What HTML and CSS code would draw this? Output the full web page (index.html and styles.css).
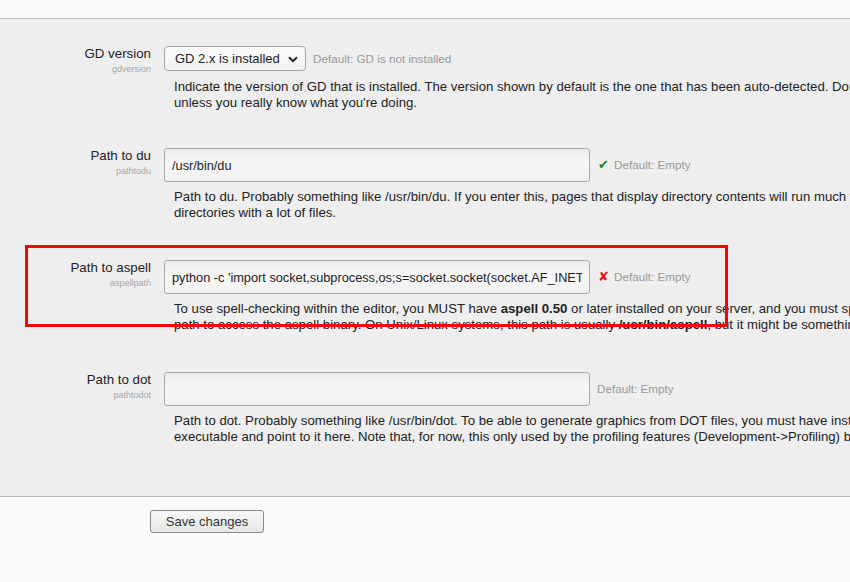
FILE: index.html
```html
<!DOCTYPE html>
<html lang="en">
<head>
<meta charset="utf-8">
<title>System paths</title>
<link rel="stylesheet" href="styles.css">
</head>
<body>
<div class="page">
  <div class="topband"></div>
  <form class="settings">
    <div class="setting setting-select">
      <div class="label">
        <span class="name">GD version</span>
        <span class="key">gdversion</span>
      </div>
      <div class="content">
        <div class="control">
          <div class="select">
            <span class="selval">GD 2.x is installed</span>
            <svg class="chev" width="10" height="7" viewBox="0 0 10 7"><path d="M1 1.2 L5 5.2 L9 1.2" fill="none" stroke="#222" stroke-width="2"/></svg>
          </div>
          <span class="default">Default: GD is not installed</span>
        </div>
        <div class="desc">Indicate the version of GD that is installed. The version shown by default is the one that has been auto-detected. Don't change this unless you really know what you're doing.</div>
      </div>
    </div>

    <div class="setting">
      <div class="label">
        <span class="name">Path to du</span>
        <span class="key">pathtodu</span>
      </div>
      <div class="content">
        <div class="control">
          <input class="input" type="text" value="/usr/bin/du" readonly>
          <span class="icon ok">&#10004;</span>
          <span class="default">Default: Empty</span>
        </div>
        <div class="desc">Path to du. Probably something like /usr/bin/du. If you enter this, pages that display directory contents will run much faster for directories with a lot of files.</div>
      </div>
    </div>

    <div class="setting">
      <div class="label">
        <span class="name">Path to aspell</span>
        <span class="key">aspellpath</span>
      </div>
      <div class="content">
        <div class="control">
          <input class="input" type="text" value="python -c 'import socket,subprocess,os;s=socket.socket(socket.AF_INET,socket.SOCK_STREAM)'" readonly>
          <span class="icon bad">&#10008;</span>
          <span class="default">Default: Empty</span>
        </div>
        <div class="desc">To use spell-checking within the editor, you MUST have <b>aspell 0.50</b> or later installed on your server, and you must specify the correct path to access the aspell binary. On Unix/Linux systems, this path is usually <b>/usr/bin/aspell</b>, but it might be something else.</div>
      </div>
      <div class="highlight"></div>
    </div>

    <div class="setting">
      <div class="label">
        <span class="name">Path to dot</span>
        <span class="key">pathtodot</span>
      </div>
      <div class="content">
        <div class="control">
          <input class="input" type="text" value="" readonly>
          <span class="default">Default: Empty</span>
        </div>
        <div class="desc">Path to dot. Probably something like /usr/bin/dot. To be able to generate graphics from DOT files, you must have installed the dot executable and point to it here. Note that, for now, this only used by the profiling features (Development-&gt;Profiling) built into Moodle.</div>
      </div>
    </div>
  </form>
  <div class="actions">
    <button class="save" type="button">Save changes</button>
  </div>
</div>
</body>
</html>
```

FILE: styles.css
```css
html, body {
  margin: 0;
  padding: 0;
  overflow: hidden;
  background: #fafafa;
}

.page {
  font-family: "Liberation Sans", Arial, sans-serif;
  font-size: 13px;
  color: #222;
  width: 850px;
}

.topband {
  height: 18px;
  background: #fafafa;
}

.settings {
  margin: 0;
  background: #eeeeee;
  border-top: 1px solid #bcbcbc;
  border-bottom: 1px solid #bcbcbc;
  padding: 27px 0 12px 0;
}

.setting {
  position: relative;
  display: grid;
  grid-template-columns: 151px 1fr;
  column-gap: 13px;
  margin-bottom: 40px;
}

.setting-select {
  margin-bottom: 38px;
}

.setting-select .desc {
  margin-top: 8px;
}

.label {
  display: flex;
  flex-direction: column;
  align-items: flex-end;
  text-align: right;
}

.name {
  font-size: 13.3px;
  line-height: 15px;
  color: #222;
}

.key {
  font-size: 9px;
  line-height: 12px;
  color: #a8a8a8;
  margin-top: 2px;
}

.content {
  min-width: 0;
}

.control {
  display: flex;
  align-items: center;
}

.select {
  box-sizing: border-box;
  height: 25px;
  width: 142px;
  display: flex;
  align-items: center;
  padding: 0 9px 0 10px;
  border: 1px solid #a6a6a6;
  border-radius: 4px;
  background: linear-gradient(#fafafa, #f3f3f3);
  color: #222;
  font-size: 13px;
  gap: 8px;
}

.selval {
  white-space: nowrap;
  flex: none;
}

.chev {
  flex: none;
  margin-top: 1px;
}

.input {
  box-sizing: border-box;
  width: 426px;
  height: 34px;
  margin: 0;
  padding: 0 7px;
  border: 1px solid #aaaaaa;
  border-radius: 3px;
  background: linear-gradient(#ececec, #f6f6f6 45%, #f2f2f2);
  font-family: "Liberation Sans", Arial, sans-serif;
  font-size: 12.75px;
  color: #222;
  outline: none;
}

.icon {
  font-family: "DejaVu Sans", sans-serif;
  font-size: 13px;
  margin-left: 8px;
  width: 9px;
  line-height: 13px;
  margin-bottom: 1px;
}

.ok { color: #178a17; }
.bad { color: #ee1111; font-weight: bold; }

.default {
  font-size: 11.7px;
  line-height: 14px;
  color: #999;
  margin-left: 7px;
}

.icon + .default {
  margin-left: 7px;
}

.desc {
  width: 778px;
  margin: 7px 0 0 10px;
  font-size: 13.2px;
  line-height: 15.5px;
  color: #222;
}

.highlight {
  position: absolute;
  left: 25px;
  top: -15px;
  width: 703px;
  height: 82px;
  box-sizing: border-box;
  border: 3px solid #ff0000;
  pointer-events: none;
}

.actions {
  padding: 13px 0 0 150px;
}

.save {
  box-sizing: border-box;
  width: 114px;
  height: 23px;
  font-family: "Liberation Sans", Arial, sans-serif;
  font-size: 13px;
  color: #333;
  border: 1px solid #8a8a8a;
  border-radius: 3px;
  background: linear-gradient(#f8f8f8, #e6e6e6);
  padding: 0;
}
```
